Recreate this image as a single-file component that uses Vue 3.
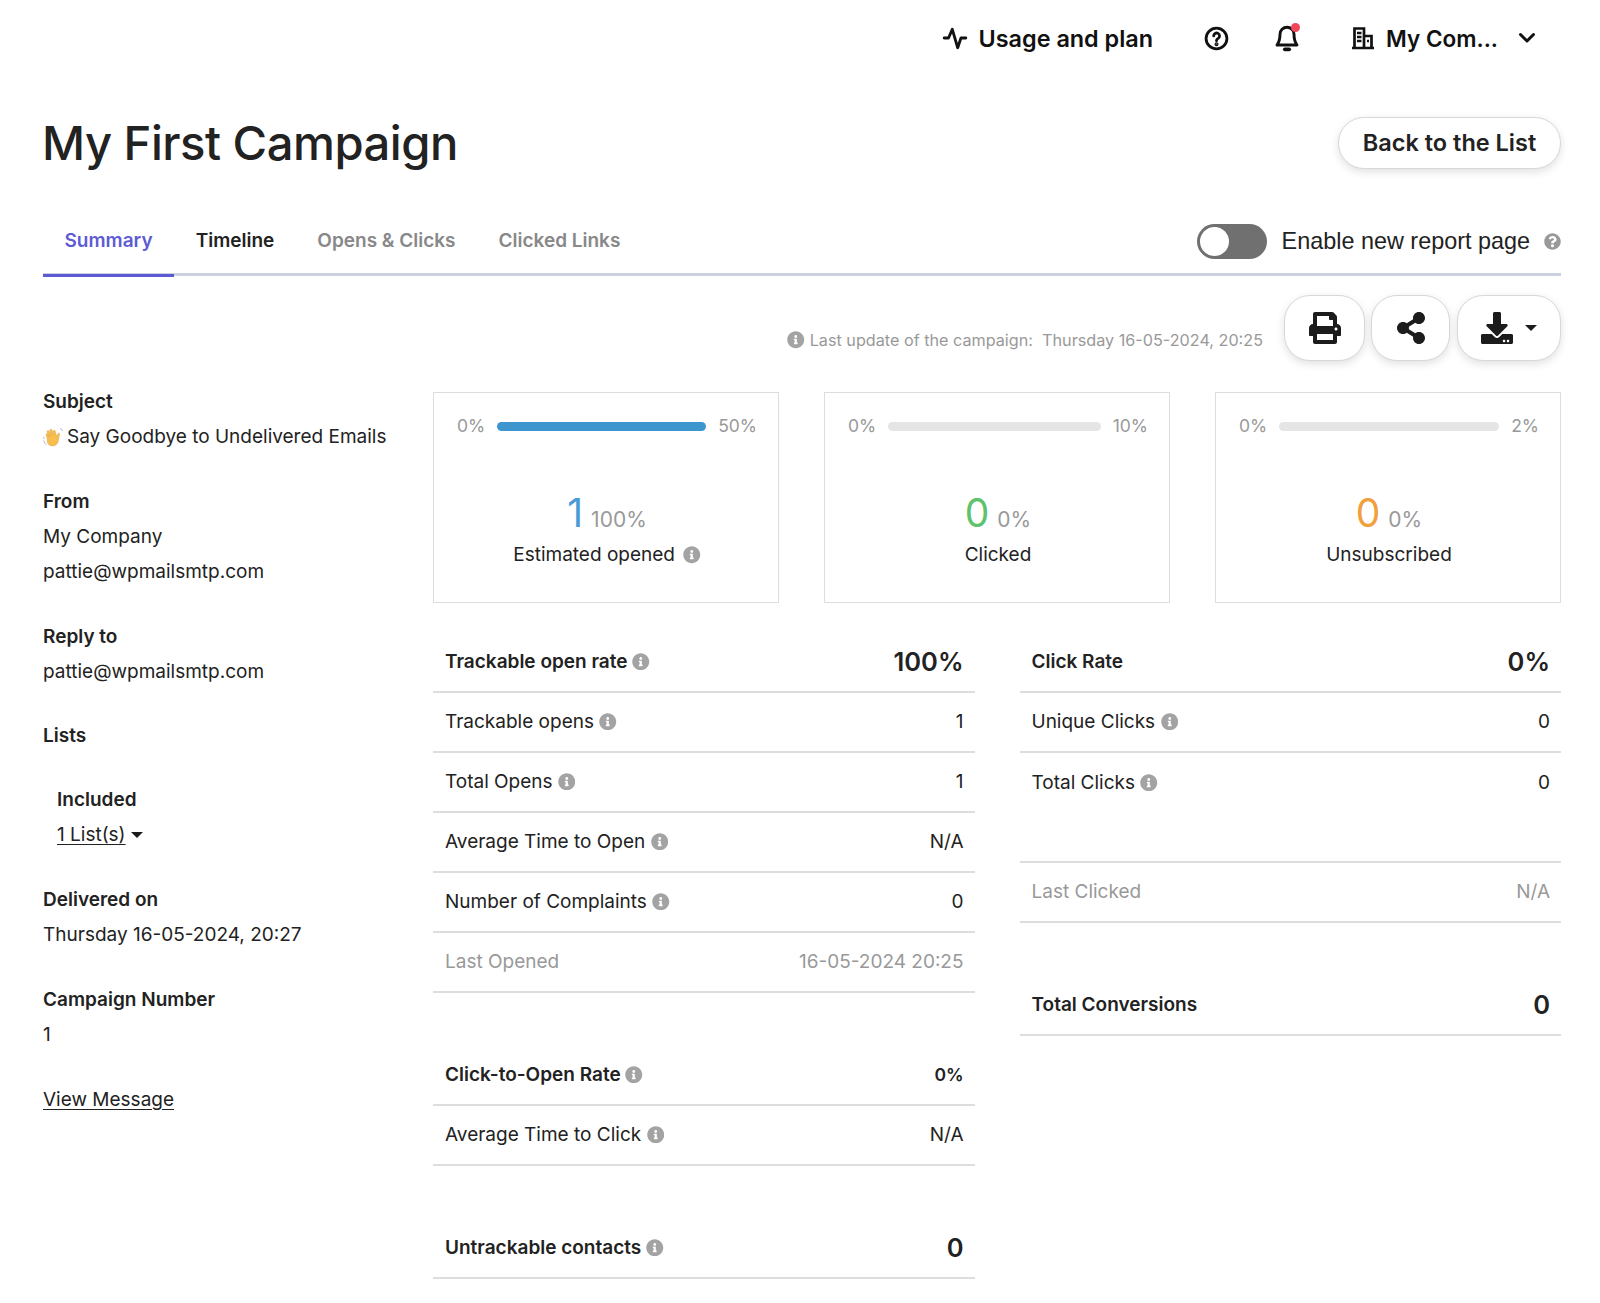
<script setup>
const infoPath = 'M256 8C119.043 8 8 119.083 8 256c0 136.997 111.043 248 248 248s248-111.003 248-248C504 119.083 392.957 8 256 8zm0 110c23.196 0 42 18.804 42 42s-18.804 42-42 42-42-18.804-42-42 18.804-42 42-42zm56 254c0 6.627-5.373 12-12 12h-88c-6.627 0-12-5.373-12-12v-24c0-6.627 5.373-12 12-12h12v-64h-12c-6.627 0-12-5.373-12-12v-24c0-6.627 5.373-12 12-12h64c6.627 0 12 5.373 12 12v100h12c6.627 0 12 5.373 12 12v24z'

const tabs = [
  { name: 'Summary', cls: 'active' },
  { name: 'Timeline', cls: 'dark' },
  { name: 'Opens & Clicks', cls: '' },
  { name: 'Clicked Links', cls: '' },
]

const cards = [
  { max: '50%', fill: true, num: '1', pct: '100%', label: 'Estimated opened', color: '#4a9ad8', info: true },
  { max: '10%', fill: false, num: '0', pct: '0%', label: 'Clicked', color: '#5cc26d', info: false },
  { max: '2%', fill: false, num: '0', pct: '0%', label: 'Unsubscribed', color: '#f0a03c', info: false },
]

const leftGroups = [
  [
    { label: 'Trackable open rate', value: '100%', kind: 'head big', info: true },
    { label: 'Trackable opens', value: '1', info: true },
    { label: 'Total Opens', value: '1', info: true },
    { label: 'Average Time to Open', value: 'N/A', info: true },
    { label: 'Number of Complaints', value: '0', info: true },
    { label: 'Last Opened', value: '16-05-2024 20:25', kind: 'muted' },
  ],
  [
    { label: 'Click-to-Open Rate', value: '0%', kind: 'head', info: true },
    { label: 'Average Time to Click', value: 'N/A', info: true },
  ],
  [
    { label: 'Untrackable contacts', value: '0', kind: 'head big', info: true },
  ],
]
</script>

<template>
  <div class="page">
    <header class="topbar">
      <a class="top-link usage">
        <svg width="26" height="26" viewBox="0 0 24 24" fill="none" stroke="#111" stroke-width="2.6" stroke-linecap="round" stroke-linejoin="round"><path d="M2 12h4l3.500-8 5 17 3-9h4.500" /></svg>
        <span>Usage and plan</span>
      </a>
      <svg class="help" width="25" height="25" viewBox="0 0 24 24" fill="none" stroke="#111" stroke-width="2.700" stroke-linecap="round"><circle cx="12" cy="12" r="10" /><path d="M9.300 9.500a2.800 2.800 0 1 1 4.300 2.400c-1 .6-1.600 1.100-1.600 2.300" /><circle cx="12" cy="17.500" r=".6" fill="#111" /></svg>
      <span class="bell">
        <svg width="26" height="28" viewBox="0 0 24 26" fill="none" stroke="#111" stroke-width="2.700" stroke-linejoin="round"><path d="M12 3a6.500 6.500 0 0 0-6.500 6.500c0 5.500-1 7.500-2.800 10h18.600c-1.800-2.500-2.800-4.500-2.800-10A6.500 6.500 0 0 0 12 3z" /><path d="M10 23.500h4" stroke-linecap="round" stroke-width="3.500" /></svg>
        <i class="dot"></i>
      </span>
      <svg class="building" width="24" height="24" viewBox="0 0 24 24" fill="none" stroke="#111" stroke-width="2.700"><path d="M1 22h22M3.500 22V2.500h9.500V22M13 10h7.500v12" /><path d="M6 7h4.500M6 11h4.500M6 15h4.500M16 15h2" stroke-width="2.600" /></svg>
      <span class="company">My Com...</span>
      <svg class="chev" width="18" height="12" viewBox="0 0 18 12" fill="none" stroke="#111" stroke-width="3" stroke-linecap="round" stroke-linejoin="round"><path d="M2.500 2.500 9 9l6.500-6.500" /></svg>
    </header>

    <div class="title-row">
      <h1>My First Campaign</h1>
      <button class="back">Back to the List</button>
    </div>

    <nav class="tabs">
      <a v-for="t in tabs" :key="t.name" class="tab" :class="t.cls">{{ t.name }}</a>
      <div class="enable">
        <span class="switch"><i></i></span>
        <span class="enable-text">Enable new report page</span>
        <svg width="17" height="17" viewBox="0 0 512 512" fill="#999"><path d="M504 256c0 136.997-111.043 248-248 248S8 392.997 8 256C8 119.083 119.043 8 256 8s248 111.083 248 248zM262.655 90c-54.497 0-89.255 22.957-116.549 63.758-3.536 5.286-2.353 12.415 2.715 16.258l34.699 26.31c5.205 3.947 12.621 3.008 16.665-2.122 17.864-22.658 30.113-35.797 57.303-35.797 20.429 0 45.698 13.148 45.698 32.958 0 14.976-12.363 22.667-32.534 33.976C247.128 238.528 216 254.941 216 296v4c0 6.627 5.373 12 12 12h56c6.627 0 12-5.373 12-12v-1.333c0-28.462 83.186-29.647 83.186-106.667 0-58.002-60.165-102-116.531-102zM256 338c-25.365 0-46 20.635-46 46 0 25.364 20.635 46 46 46s46-20.636 46-46c0-25.365-20.635-46-46-46z" /></svg>
      </div>
    </nav>

    <div class="actions">
      <svg class="info" viewBox="0 0 512 512"><path :d="infoPath" /></svg>
      <span class="update">Last update of the campaign:&nbsp; Thursday 16-05-2024, 20:25</span>
      <button class="act print">
        <svg width="32" height="32" viewBox="0 0 512 512" fill="#1c1c1c"><path d="M448 192V77.25c0-8.49-3.37-16.62-9.37-22.63L393.37 9.37c-6-6-14.14-9.37-22.63-9.37H96C78.33 0 64 14.33 64 32v160c-35.35 0-64 28.65-64 64v112c0 8.84 7.16 16 16 16h48v96c0 17.67 14.33 32 32 32h320c17.67 0 32-14.33 32-32v-96h48c8.84 0 16-7.16 16-16V256c0-35.35-28.65-64-64-64zm-64 256H128v-96h256v96zm0-224H128V64h192v48c0 8.84 7.16 16 16 16h48v96zm48 72c-13.25 0-24-10.75-24-24 0-13.26 10.75-24 24-24s24 10.74 24 24c0 13.25-10.75 24-24 24z" /></svg>
      </button>
      <button class="act share">
        <svg width="30" height="32" viewBox="0 0 448 512" fill="#1c1c1c"><path d="M352 320c-22.608 0-43.387 7.819-59.79 20.895l-102.486-64.054a96.551 96.551 0 0 0 0-41.683l102.486-64.054C308.613 184.181 329.392 192 352 192c53.019 0 96-42.981 96-96S405.019 0 352 0s-96 42.981-96 96c0 7.158.79 14.13 2.276 20.841L155.79 180.895C139.387 167.819 118.608 160 96 160c-53.019 0-96 42.981-96 96s42.981 96 96 96c22.608 0 43.387-7.819 59.79-20.895l102.486 64.054A96.301 96.301 0 0 0 256 416c0 53.019 42.981 96 96 96s96-42.981 96-96-42.981-96-96-96z" /></svg>
      </button>
      <button class="act download">
        <svg width="32" height="32" viewBox="0 0 512 512" fill="#1c1c1c"><path d="M216 0h80c13.3 0 24 10.7 24 24v168h87.7c17.8 0 26.7 21.5 14.1 34.1L269.7 378.3c-7.5 7.5-19.8 7.5-27.3 0L90.1 226.1c-12.6-12.6-3.700-34.1 14.1-34.1H192V24c0-13.3 10.7-24 24-24zm296 376v112c0 13.3-10.7 24-24 24H24c-13.3 0-24-10.7-24-24V376c0-13.3 10.7-24 24-24h146.700l49 49c20.1 20.1 52.500 20.1 72.600 0l49-49H488c13.3 0 24 10.7 24 24zm-124 88c0-11-9-20-20-20s-20 9-20 20 9 20 20 20 20-9 20-20zm64 0c0-11-9-20-20-20s-20 9-20 20 9 20 20 20 20-9 20-20z" /></svg>
        <i class="caret"></i>
      </button>
    </div>

    <div class="main">
      <aside class="side">
        <section>
          <h4>Subject</h4>
          <p class="subject">
            <svg width="20" height="20" viewBox="1 0.500 17.500 18"><path d="M4.500 10.500 3.500 7.800c-.5-1.200 1-1.800 1.600-.7l1.400 2.400-2-4.400c-.5-1.200 1.100-1.900 1.700-.7l2 3.900-1.300-4.600c-.3-1.300 1.400-1.700 1.800-.5l1.600 4.400-.4-3.200c-.1-1.200 1.500-1.400 1.800-.2l1 4.800c.5-1.200 1-2.300 1.900-2.700.9-.3 1.300.5 1 1.200-.6 1.700-.8 3.300-1 5-.3 2.900-2.400 5-5.300 5-2.300 0-3.600-1.100-4.600-3.100z" fill="#f6bf4f" stroke="#e3a23a" stroke-width=".5" /><path d="M1.500 13c.3 1.300 1 2.300 2 3.200M1.300 9.700l.4 1.100M16.500 2c.8.300 1.500.9 1.800 1.800" fill="none" stroke="#a9b4c4" stroke-width=".9" stroke-linecap="round" /></svg>
            <span>Say Goodbye to Undelivered Emails</span>
          </p>
        </section>
        <section>
          <h4>From</h4>
          <p>My Company</p>
          <p>pattie@wpmailsmtp.com</p>
        </section>
        <section>
          <h4>Reply to</h4>
          <p>pattie@wpmailsmtp.com</p>
        </section>
        <section>
          <h4>Lists</h4>
          <div class="included">
            <h4>Included</h4>
            <p><a class="link">1 List(s)</a> <i class="caret small"></i></p>
          </div>
        </section>
        <section>
          <h4>Delivered on</h4>
          <p>Thursday 16-05-2024, 20:27</p>
        </section>
        <section>
          <h4>Campaign Number</h4>
          <p>1</p>
        </section>
        <section>
          <a class="link">View Message</a>
        </section>
      </aside>

      <div class="content">
        <div class="cards">
          <div v-for="c in cards" :key="c.label" class="card">
            <div class="scale">
              <span>0%</span>
              <div class="bar" :class="{ filled: c.fill }"></div>
              <span>{{ c.max }}</span>
            </div>
            <div class="score">
              <span class="num" :style="{ color: c.color }">{{ c.num }}</span>
              <span class="pct">{{ c.pct }}</span>
            </div>
            <div class="card-label">
              {{ c.label }}
              <svg v-if="c.info" class="info" viewBox="0 0 512 512"><path :d="infoPath" /></svg>
            </div>
          </div>
        </div>

        <div class="tables">
          <div class="col">
            <div v-for="(g, i) in leftGroups" :key="i" class="group">
              <div v-for="r in g" :key="r.label" class="row" :class="r.kind">
                <span class="row-label">
                  {{ r.label }}
                  <svg v-if="r.info" class="info" viewBox="0 0 512 512"><path :d="infoPath" /></svg>
                </span>
                <span class="row-value">{{ r.value }}</span>
              </div>
            </div>
          </div>

          <div class="col">
            <div class="group">
              <div class="row head big">
                <span class="row-label">Click Rate</span>
                <span class="row-value">0%</span>
              </div>
              <div class="row">
                <span class="row-label">Unique Clicks <svg class="info" viewBox="0 0 512 512"><path :d="infoPath" /></svg></span>
                <span class="row-value">0</span>
              </div>
              <div class="row plain">
                <span class="row-label">Total Clicks <svg class="info" viewBox="0 0 512 512"><path :d="infoPath" /></svg></span>
                <span class="row-value">0</span>
              </div>
              <div class="row muted topline">
                <span class="row-label">Last Clicked</span>
                <span class="row-value">N/A</span>
              </div>
            </div>
            <div class="group">
              <div class="row head big">
                <span class="row-label">Total Conversions</span>
                <span class="row-value">0</span>
              </div>
            </div>
          </div>
        </div>
      </div>
    </div>
  </div>
</template>

<style>
html, body {
  background: #fff;
}
</style>

<style scoped>
.page {
  box-sizing: border-box;
  height: 1303px;
  padding: 0 39px 0 43px;
  font-family: Inter, "Liberation Sans", sans-serif;
  font-size: 19px;
  color: #222;
  overflow: hidden;
}
button {
  font-family: inherit;
  background: #fff;
  border: 1.5px solid #d8d8d8;
  box-shadow: 0 3px 8px rgba(0, 0, 0, .12);
  color: #222;
  padding: 0;
}
.topbar {
  display: flex;
  align-items: center;
  justify-content: flex-end;
  height: 76px;
  padding-right: 25px;
  color: #111;
  font-size: 22.500px;
  font-weight: 600;
}
.top-link {
  display: flex;
  align-items: center;
  gap: 11px;
  font-size: 23.400px;
}
.help {
  margin-left: 51px;
}
.bell {
  position: relative;
  display: flex;
  margin-left: 45px;
}
.dot {
  position: absolute;
  top: -1px;
  right: 0;
  width: 9px;
  height: 9px;
  border-radius: 50%;
  background: #f0465a;
}
.building {
  margin-left: 51px;
}
.company {
  margin-left: 11px;
}
.chev {
  margin-left: 20px;
}
.title-row {
  display: flex;
  align-items: center;
  justify-content: space-between;
  height: 52px;
  margin-top: 41px;
}
h1 {
  margin: 0 0 2px -1px;
  font-size: 47.200px;
  font-weight: 500;
  letter-spacing: -.5px;
  color: #222;
}
.back {
  width: 223px;
  height: 52px;
  padding-bottom: 2px;
  border-radius: 26px;
  font-size: 23.500px;
  font-weight: 600;
}
.tabs {
  display: flex;
  align-items: center;
  height: 69px;
  margin-top: 35px;
  border-bottom: 3px solid #ccd1e0;
}
.tab {
  display: flex;
  align-items: center;
  height: 67px;
  margin-bottom: -3px;
  padding: 3px 21.500px 0;
  border-bottom: 3px solid transparent;
  font-size: 19px;
  font-weight: 600;
  color: #888;
}
.tab.active {
  color: #5d5bd4;
  border-bottom-color: #5d5bd4;
}
.tab.dark {
  color: #222;
}
.enable {
  display: flex;
  align-items: center;
  margin-left: auto;
  margin-top: 6px;
}
.switch {
  display: block;
  box-sizing: border-box;
  width: 70px;
  height: 35px;
  padding: 3px;
  border-radius: 18px;
  background: #707070;
}
.switch i {
  display: block;
  width: 29px;
  height: 29px;
  border-radius: 50%;
  background: #fff;
}
.enable-text {
  margin: 0 14px 0 15px;
  font-family: "Liberation Sans", Arial, sans-serif;
  font-size: 23.400px;
  color: #222;
}
.info {
  width: 17.500px;
  height: 17.500px;
  fill: #a3a3a3;
  vertical-align: -2.500px;
}
.actions {
  display: flex;
  align-items: center;
  justify-content: flex-end;
  height: 66px;
  margin-top: 19px;
}
.update {
  margin: 24px 21px 0 5px;
  font-size: 16.200px;
  color: #999;
}
.actions > .info {
  margin-top: 24px;
}
.act {
  display: flex;
  align-items: center;
  justify-content: center;
  height: 66px;
  border-radius: 26px;
}
.print {
  width: 81px;
}
.share {
  width: 79px;
  margin-left: 6px;
}
.download {
  width: 104px;
  margin-left: 7px;
}
.caret {
  display: inline-block;
  width: 0;
  height: 0;
  margin-left: 12px;
  border-top: 6px solid #1c1c1c;
  border-left: 6px solid transparent;
  border-right: 6px solid transparent;
}
.caret.small {
  margin-left: 0;
  vertical-align: 3px;
}
.main {
  display: flex;
  margin-top: 23px;
}
.side {
  flex: 0 0 390px;
  display: flex;
  flex-direction: column;
  gap: 29.800px;
  line-height: 35px;
}
.side h4 {
  margin: 0;
  font-size: 19px;
  font-weight: 600;
}
.side p {
  margin: 0;
  white-space: nowrap;
}
.subject {
  display: flex;
  align-items: center;
  gap: 4px;
}
.included {
  margin: 29px 0 0 14px;
}
.link {
  text-decoration: underline;
  text-underline-offset: 3px;
}
.content {
  flex: 1;
  padding-top: 8px;
}
.cards {
  display: flex;
  gap: 45px;
}
.card {
  box-sizing: border-box;
  flex: 1;
  height: 211px;
  padding: 19px 21px 0 23px;
  border: 1.500px solid #ddd;
  text-align: center;
}
.scale {
  display: flex;
  align-items: center;
  justify-content: space-between;
  height: 26px;
  font-size: 17.500px;
  color: #999;
}
.bar {
  flex: 1;
  height: 9px;
  margin: 3px 12px 0;
  border-radius: 5px;
  background: #e5e5e5;
}
.bar.filled {
  background: #3e96cf;
}
.score {
  display: flex;
  align-items: baseline;
  justify-content: center;
  gap: 8px;
  margin-top: 55px;
  line-height: 40px;
}
.num {
  font-size: 39px;
}
.pct {
  font-size: 21px;
  color: #999;
}
.card-label {
  line-height: 30px;
}
.card-label .info {
  margin-left: 3px;
}
.tables {
  display: flex;
  gap: 45px;
  margin-top: 30px;
}
.col {
  flex: 1;
  display: flex;
  flex-direction: column;
  gap: 53px;
}
.row {
  box-sizing: border-box;
  display: flex;
  align-items: center;
  justify-content: space-between;
  height: 60px;
  padding: 0 11px 2px 12px;
  border-bottom: 2px solid #ddd;
  white-space: nowrap;
}
.row.head {
  font-weight: 600;
}
.row.head .row-value {
  font-size: 17.500px;
}
.row.big .row-value {
  font-size: 25.500px;
}
.row.muted {
  color: #999;
}
.row.plain {
  border-bottom: 0;
}
.row.topline {
  height: 62px;
  margin-top: 48px;
  border-top: 2px solid #ddd;
}
</style>
